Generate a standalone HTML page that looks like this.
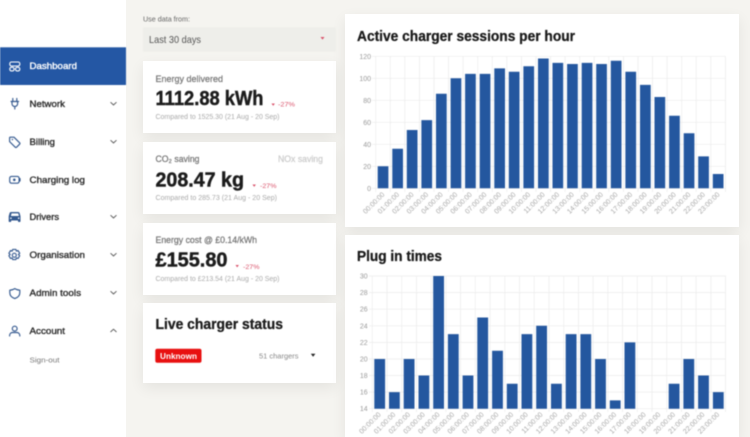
<!DOCTYPE html>
<html lang="en"><head><meta charset="utf-8"><title>Dashboard</title>
<style>
html,body{margin:0;padding:0;width:750px;height:437px;overflow:hidden;background:#f5f4f0}
#p{position:relative;width:750px;height:437px;overflow:hidden;background:#f5f4f0}
.w{position:absolute;background:#fff}
.c{box-shadow:0 5px 14px rgba(0,0,0,.07)}
svg{position:absolute;left:0;top:0;filter:blur(.4px)}
text{font-family:"Liberation Sans",sans-serif}
.n{font-size:9.5px;fill:#2c2c2c;stroke:#2c2c2c;stroke-width:.35}
.l{font-size:9px;fill:#777;stroke:#777;stroke-width:.25}
.b{font-size:20px;font-weight:bold;fill:#1c1c1c;stroke:#1c1c1c;stroke-width:.45}
.s{font-size:7px;fill:#aaa}
.r{font-size:6.5px;fill:#d9536b}
.t{font-size:15px;font-weight:bold;fill:#1a1a1a;stroke:#1a1a1a;stroke-width:.3}
.y{font-size:7px;fill:#999;text-anchor:end}
.x{font-size:7px;fill:#a5a5a5;text-anchor:end}
.i{fill:none;stroke:#34598f;stroke-width:1.15;stroke-linecap:round;stroke-linejoin:round}
.ch{fill:none;stroke:#555;stroke-width:.9}
.g{stroke:#ebebeb;stroke-width:.7;fill:none}
</style></head><body><div id="p">
<div class="w" style="left:0;top:0;width:126px;height:437px"></div>
<div class="w c" style="left:143px;top:61px;width:193px;height:72px"></div>
<div class="w c" style="left:143px;top:142px;width:193px;height:72px"></div>
<div class="w c" style="left:143px;top:223px;width:193px;height:72px"></div>
<div class="w c" style="left:143px;top:303px;width:193px;height:80px"></div>
<div class="w c" style="left:345px;top:14px;width:394px;height:213px"></div>
<div class="w c" style="left:345px;top:235px;width:394px;height:202px"></div>
<svg width="750" height="437" viewBox="0 0 750 437" xmlns="http://www.w3.org/2000/svg">
<!-- sidebar -->
<rect x="0" y="47.3" width="126" height="37.7" fill="#2457a4"/>
<g fill="none" stroke="#fff" stroke-width="1.1"><rect x="9.8" y="62" width="10" height="4" rx="1.6"/><rect x="9.8" y="67.3" width="4.3" height="3.6" rx="1.6"/><rect x="15.5" y="67.3" width="4.3" height="3.6" rx="1.6"/></g>
<text x="29.5" y="69" class="n" style="fill:#fff;stroke:#fff" textLength="47.5" lengthAdjust="spacingAndGlyphs">Dashboard</text>
<path class="i" d="M12.8 98.5v2.8M16.8 98.5v2.8M11 101.5h7.6M12 101.5v2.2a2.8 2.8 0 0 0 5.6 0v-2.2M14.8 106.5v2.5"/>
<text x="29.5" y="107" class="n" textLength="35.5" lengthAdjust="spacingAndGlyphs">Network</text>
<path class="ch" d="M110.5 102.2l3 2.8 3-2.8"/>
<path class="i" d="M10 137.2h4l5.6 5.6a1 1 0 0 1 0 1.4l-3 3a1 1 0 0 1-1.4 0L9.6 141.6v-4z"/><circle cx="12.4" cy="139.6" r=".7" fill="#34598f"/>
<text x="29.5" y="145" class="n" textLength="25.5" lengthAdjust="spacingAndGlyphs">Billing</text>
<path class="ch" d="M110.5 140.2l3 2.8 3-2.8"/>
<rect class="i" x="9.7" y="176.4" width="9.4" height="6.8" rx="1.8"/><path class="i" d="M20 178.6v2.4"/><circle cx="14.3" cy="179.8" r="1.3" fill="#34598f"/>
<text x="29.5" y="183" class="n" textLength="55.5" lengthAdjust="spacingAndGlyphs">Charging log</text>
<path d="M11.6 212h6.6c.7 0 1.2.4 1.4 1l.9 3.2v5.1c0 .4-.3.7-.7.7h-1.1c-.4 0-.7-.3-.7-.7v-.8h-6.8v.8c0 .4-.3.7-.7.7H9.4c-.4 0-.7-.3-.7-.7v-5.1l.9-3.2c.2-.6.8-1 1.4-1z" fill="#34598f"/><path d="M10.9 216l.6-2.6h6.8l.6 2.6z" fill="#fff"/><circle cx="10.9" cy="218.2" r=".8" fill="#fff"/><circle cx="18.7" cy="218.2" r=".8" fill="#fff"/>
<text x="29.5" y="220" class="n" textLength="29.5" lengthAdjust="spacingAndGlyphs">Drivers</text>
<path class="ch" d="M110.5 215.2l3 2.8 3-2.8"/>
<path class="i" d="M12.7 249.4h3.2l.5 1.7 1.7-.5 1.6 2.7-1.3 1.2 1.3 1.2-1.6 2.7-1.7-.5-.5 1.7h-3.2l-.5-1.7-1.7.5-1.6-2.7 1.3-1.2-1.3-1.2 1.6-2.7 1.7.5z"/><circle class="i" cx="14.3" cy="255.2" r="2"/>
<text x="29.5" y="258" class="n" textLength="55.5" lengthAdjust="spacingAndGlyphs">Organisation</text>
<path class="ch" d="M110.5 253.2l3 2.8 3-2.8"/>
<path class="i" d="M14.8 288.6c1.6 1 3.3 1.5 5 1.6v2.6c0 2.8-2 4.8-5 5.8-3-1-5-3-5-5.8v-2.6c1.7-.1 3.4-.6 5-1.6z"/>
<text x="29.5" y="296" class="n" textLength="51.5" lengthAdjust="spacingAndGlyphs">Admin tools</text>
<path class="ch" d="M110.5 291.2l3 2.8 3-2.8"/>
<circle class="i" cx="14.7" cy="328.6" r="2.4"/><path class="i" d="M9.6 336v-.6c0-1.6 1.3-2.9 2.9-2.9h4.4c1.6 0 2.9 1.3 2.9 2.9v.6"/>
<text x="29.5" y="334" class="n" textLength="35.5" lengthAdjust="spacingAndGlyphs">Account</text>
<path class="ch" d="M110.5 332l3-2.8 3 2.8"/>
<text x="29.5" y="362.5" style="font-size:7.5px;fill:#777" textLength="30" lengthAdjust="spacingAndGlyphs">Sign-out</text>
<!-- filter -->
<text x="143" y="21.5" style="font-size:7.5px;fill:#666" textLength="47" lengthAdjust="spacingAndGlyphs">Use data from:</text>
<rect x="143" y="27.3" width="193" height="24.4" fill="#eeeeea"/>
<text x="149" y="43" style="font-size:10.5px;fill:#555" textLength="52" lengthAdjust="spacingAndGlyphs">Last 30 days</text>
<path d="M320.5 37h4l-2 2.6z" fill="#d9536b"/>
<!-- card 1 -->
<text x="155.5" y="82" class="l" textLength="67.5" lengthAdjust="spacingAndGlyphs">Energy delivered</text>
<text x="155.5" y="105" class="b" textLength="108" lengthAdjust="spacingAndGlyphs">1112.88 kWh</text>
<path d="M271.5 103.5h3.4l-1.7 2.4z" fill="#d9536b"/>
<text x="278" y="106.5" class="r" textLength="17" lengthAdjust="spacingAndGlyphs">-27%</text>
<text x="155.5" y="119" class="s" textLength="124" lengthAdjust="spacingAndGlyphs">Compared to 1525.30 (21 Aug - 20 Sep)</text>
<!-- card 2 -->
<text x="155.5" y="162" class="l" textLength="44" lengthAdjust="spacingAndGlyphs">CO₂ saving</text>
<text x="278" y="162" class="l" style="fill:#ccc;stroke:#ccc" textLength="45" lengthAdjust="spacingAndGlyphs">NOx saving</text>
<text x="155.5" y="186.5" class="b" textLength="88.5" lengthAdjust="spacingAndGlyphs">208.47 kg</text>
<path d="M252.5 184.5h3.4l-1.7 2.4z" fill="#d9536b"/>
<text x="260" y="188" class="r" textLength="16.5" lengthAdjust="spacingAndGlyphs">-27%</text>
<text x="155.5" y="200" class="s" textLength="121.5" lengthAdjust="spacingAndGlyphs">Compared to 285.73 (21 Aug - 20 Sep)</text>
<!-- card 3 -->
<text x="155.5" y="243" class="l" textLength="101.5" lengthAdjust="spacingAndGlyphs">Energy cost @ £0.14/kWh</text>
<text x="155.5" y="266.5" class="b" textLength="72" lengthAdjust="spacingAndGlyphs">£155.80</text>
<path d="M235.5 265h3.4l-1.7 2.4z" fill="#d9536b"/>
<text x="243" y="269" class="r" textLength="16.5" lengthAdjust="spacingAndGlyphs">-27%</text>
<text x="155.5" y="281" class="s" textLength="124" lengthAdjust="spacingAndGlyphs">Compared to £213.54 (21 Aug - 20 Sep)</text>
<!-- card 4 -->
<text x="155.5" y="329" style="font-size:14.5px;font-weight:bold;fill:#1c1c1c;stroke:#1c1c1c;stroke-width:.3" textLength="127.5" lengthAdjust="spacingAndGlyphs">Live charger status</text>
<rect x="155.3" y="348.7" width="46.2" height="14" rx="2" fill="#e81010"/>
<text x="160" y="358.8" style="font-size:8.5px;font-weight:bold;fill:#fff" textLength="37" lengthAdjust="spacingAndGlyphs">Unknown</text>
<text x="259" y="358.5" style="font-size:7.5px;fill:#888" textLength="39.5" lengthAdjust="spacingAndGlyphs">51 chargers</text>
<path d="M310.8 353.7h4.6l-2.3 3z" fill="#222"/>
<!-- chart 1 -->
<text x="357" y="41" class="t" textLength="218" lengthAdjust="spacingAndGlyphs">Active charger sessions per hour</text>
<path class="g" d="M372 56.3H725.4M372 78.3H725.4M372 100.3H725.4M372 122.3H725.4M372 144.3H725.4M372 166.3H725.4M372 188.3H725.4M375.7 56.3V192M390.3 56.3V192M404.8 56.3V192M419.4 56.3V192M434 56.3V192M448.6 56.3V192M463.1 56.3V192M477.7 56.3V192M492.3 56.3V192M506.8 56.3V192M521.4 56.3V192M536 56.3V192M550.5 56.3V192M565.1 56.3V192M579.7 56.3V192M594.2 56.3V192M608.8 56.3V192M623.4 56.3V192M638 56.3V192M652.5 56.3V192M667.1 56.3V192M681.7 56.3V192M696.2 56.3V192M710.8 56.3V192M725.4 56.3V192"/>
<path fill="#24579f" d="M377.7 166.3h10.7V188.3h-10.7zM392.3 148.7h10.7V188.3h-10.7zM406.8 130h10.7V188.3h-10.7zM421.4 120.1h10.7V188.3h-10.7zM436 93.7h10.7V188.3h-10.7zM450.6 78.3h10.7V188.3h-10.7zM465.1 73.9h10.7V188.3h-10.7zM479.7 73.9h10.7V188.3h-10.7zM494.3 68.4h10.7V188.3h-10.7zM508.8 71.7h10.7V188.3h-10.7zM523.4 66.2h10.7V188.3h-10.7zM538 58.5h10.7V188.3h-10.7zM552.5 62.9h10.7V188.3h-10.7zM567.1 64h10.7V188.3h-10.7zM581.7 62.9h10.7V188.3h-10.7zM596.2 64h10.7V188.3h-10.7zM610.8 60.7h10.7V188.3h-10.7zM625.4 71.7h10.7V188.3h-10.7zM640 84.9h10.7V188.3h-10.7zM654.5 97h10.7V188.3h-10.7zM669.1 115.7h10.7V188.3h-10.7zM683.7 133.3h10.7V188.3h-10.7zM698.2 156.4h10.7V188.3h-10.7zM712.8 174h10.7V188.3h-10.7z"/>
<text class="y" x="371" y="58.8">120</text><text class="y" x="371" y="80.8">100</text><text class="y" x="371" y="102.8">80</text><text class="y" x="371" y="124.8">60</text><text class="y" x="371" y="146.8">40</text><text class="y" x="371" y="168.8">20</text><text class="y" x="371" y="190.8">0</text>
<text class="x" transform="translate(385 195) rotate(-45)">00:00:00</text>
<text class="x" transform="translate(399.6 195) rotate(-45)">01:00:00</text>
<text class="x" transform="translate(414.1 195) rotate(-45)">02:00:00</text>
<text class="x" transform="translate(428.7 195) rotate(-45)">03:00:00</text>
<text class="x" transform="translate(443.3 195) rotate(-45)">04:00:00</text>
<text class="x" transform="translate(457.9 195) rotate(-45)">05:00:00</text>
<text class="x" transform="translate(472.4 195) rotate(-45)">06:00:00</text>
<text class="x" transform="translate(487 195) rotate(-45)">07:00:00</text>
<text class="x" transform="translate(501.6 195) rotate(-45)">08:00:00</text>
<text class="x" transform="translate(516.1 195) rotate(-45)">09:00:00</text>
<text class="x" transform="translate(530.7 195) rotate(-45)">10:00:00</text>
<text class="x" transform="translate(545.3 195) rotate(-45)">11:00:00</text>
<text class="x" transform="translate(559.8 195) rotate(-45)">12:00:00</text>
<text class="x" transform="translate(574.4 195) rotate(-45)">13:00:00</text>
<text class="x" transform="translate(589 195) rotate(-45)">14:00:00</text>
<text class="x" transform="translate(603.5 195) rotate(-45)">15:00:00</text>
<text class="x" transform="translate(618.1 195) rotate(-45)">16:00:00</text>
<text class="x" transform="translate(632.7 195) rotate(-45)">17:00:00</text>
<text class="x" transform="translate(647.3 195) rotate(-45)">18:00:00</text>
<text class="x" transform="translate(661.8 195) rotate(-45)">19:00:00</text>
<text class="x" transform="translate(676.4 195) rotate(-45)">20:00:00</text>
<text class="x" transform="translate(691 195) rotate(-45)">21:00:00</text>
<text class="x" transform="translate(705.5 195) rotate(-45)">22:00:00</text>
<text class="x" transform="translate(720.1 195) rotate(-45)">23:00:00</text>
<!-- chart 2 -->
<text x="357" y="261" class="t" textLength="85" lengthAdjust="spacingAndGlyphs">Plug in times</text>
<path class="g" d="M369 276H725.9M369 292.6H725.9M369 309.2H725.9M369 325.8H725.9M369 342.4H725.9M369 359H725.9M369 375.5H725.9M369 392.1H725.9M369 408.7H725.9M372.3 276V412M387 276V412M401.7 276V412M416.5 276V412M431.2 276V412M445.9 276V412M460.6 276V412M475.3 276V412M490.1 276V412M504.8 276V412M519.5 276V412M534.2 276V412M549 276V412M563.7 276V412M578.4 276V412M593.1 276V412M607.8 276V412M622.5 276V412M637.3 276V412M652 276V412M666.7 276V412M681.4 276V412M696.1 276V412M710.9 276V412M725.6 276V412"/>
<path fill="#24579f" d="M374.3 359h10.8V408.7h-10.8zM389 392.1h10.8V408.7h-10.8zM403.7 359h10.8V408.7h-10.8zM418.5 375.5h10.8V408.7h-10.8zM433.2 276h10.8V408.7h-10.8zM447.9 334.1h10.8V408.7h-10.8zM462.6 375.5h10.8V408.7h-10.8zM477.3 317.5h10.8V408.7h-10.8zM492.1 350.7h10.8V408.7h-10.8zM506.8 383.8h10.8V408.7h-10.8zM521.5 334.1h10.8V408.7h-10.8zM536.2 325.8h10.8V408.7h-10.8zM551 383.8h10.8V408.7h-10.8zM565.7 334.1h10.8V408.7h-10.8zM580.4 334.1h10.8V408.7h-10.8zM595.1 359h10.8V408.7h-10.8zM609.8 400.4h10.8V408.7h-10.8zM624.5 342.4h10.8V408.7h-10.8zM668.7 383.8h10.8V408.7h-10.8zM683.4 359h10.8V408.7h-10.8zM698.1 375.5h10.8V408.7h-10.8zM712.9 392.1h10.8V408.7h-10.8z"/>
<text class="y" x="367.7" y="278.5">30</text><text class="y" x="367.7" y="295.1">28</text><text class="y" x="367.7" y="311.7">26</text><text class="y" x="367.7" y="328.3">24</text><text class="y" x="367.7" y="344.9">22</text><text class="y" x="367.7" y="361.5">20</text><text class="y" x="367.7" y="378">18</text><text class="y" x="367.7" y="394.6">16</text><text class="y" x="367.7" y="411.2">14</text>
<text class="x" transform="translate(381.2 415) rotate(-45)">00:00:00</text>
<text class="x" transform="translate(395.9 415) rotate(-45)">01:00:00</text>
<text class="x" transform="translate(410.6 415) rotate(-45)">02:00:00</text>
<text class="x" transform="translate(425.4 415) rotate(-45)">03:00:00</text>
<text class="x" transform="translate(440.1 415) rotate(-45)">04:00:00</text>
<text class="x" transform="translate(454.8 415) rotate(-45)">05:00:00</text>
<text class="x" transform="translate(469.5 415) rotate(-45)">06:00:00</text>
<text class="x" transform="translate(484.2 415) rotate(-45)">07:00:00</text>
<text class="x" transform="translate(499 415) rotate(-45)">08:00:00</text>
<text class="x" transform="translate(513.7 415) rotate(-45)">09:00:00</text>
<text class="x" transform="translate(528.4 415) rotate(-45)">10:00:00</text>
<text class="x" transform="translate(543.1 415) rotate(-45)">11:00:00</text>
<text class="x" transform="translate(557.9 415) rotate(-45)">12:00:00</text>
<text class="x" transform="translate(572.6 415) rotate(-45)">13:00:00</text>
<text class="x" transform="translate(587.3 415) rotate(-45)">14:00:00</text>
<text class="x" transform="translate(602 415) rotate(-45)">15:00:00</text>
<text class="x" transform="translate(616.7 415) rotate(-45)">16:00:00</text>
<text class="x" transform="translate(631.4 415) rotate(-45)">17:00:00</text>
<text class="x" transform="translate(646.2 415) rotate(-45)">18:00:00</text>
<text class="x" transform="translate(660.9 415) rotate(-45)">19:00:00</text>
<text class="x" transform="translate(675.6 415) rotate(-45)">20:00:00</text>
<text class="x" transform="translate(690.3 415) rotate(-45)">21:00:00</text>
<text class="x" transform="translate(705 415) rotate(-45)">22:00:00</text>
<text class="x" transform="translate(719.8 415) rotate(-45)">23:00:00</text>
</svg>
</div></body></html>
